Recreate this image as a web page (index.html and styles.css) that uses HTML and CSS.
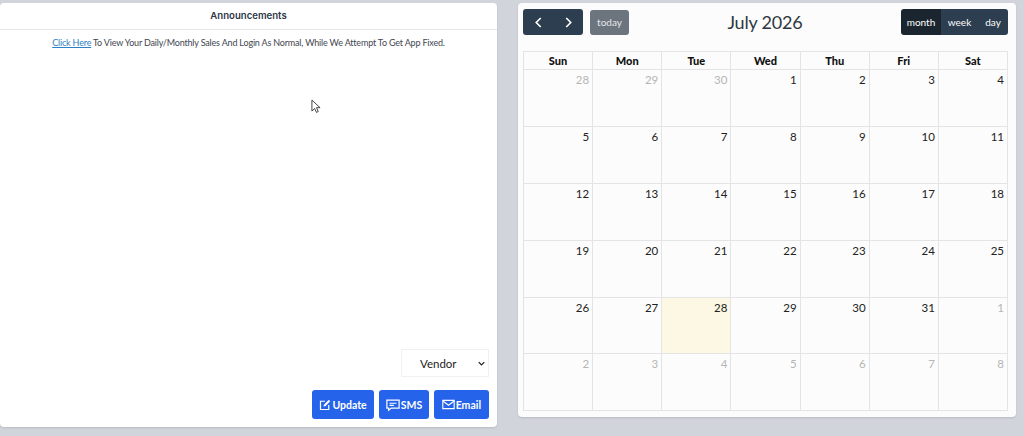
FILE: index.html
```html
<!DOCTYPE html>
<html lang="en">
<head>
<meta charset="utf-8">
<title>Dashboard</title>
<link rel="stylesheet" href="styles.css">
</head>
<body>
<main class="page">
  <section class="card ann">
    <header class="ann-head">Announcements</header>
    <p class="ann-text"><a href="#">Click Here</a> To View Your Daily/Monthly Sales And Login As Normal, While We Attempt To Get App Fixed.</p>
    <div class="ann-foot">
      <select class="vendor"><option>Vendor</option></select>
      <div class="actions">
        <button class="act act-update"><svg viewBox="0 0 16 16" width="12" height="12" fill="none" stroke="currentColor" stroke-width="1.6"><path d="M8 3H2v11h11V8"/><path d="M6 10l.5-2.500L13 1l2 2-6.500 6.500z" fill="currentColor" stroke="none"/></svg>Update</button>
        <button class="act act-sms"><svg viewBox="0 0 16 16" width="14" height="14" fill="none" stroke="currentColor" stroke-width="1.400"><path d="M1 2.500h14v9H6l-3 2.500v-2.500H1z"/><path d="M4 6h8M4 8.500h5"/></svg>SMS</button>
        <button class="act"><svg viewBox="0 0 16 16" width="13" height="13" fill="none" stroke="currentColor" stroke-width="1.400"><path d="M1 3h14v10H1z"/><path d="M1.500 4L8 9l6.500-5"/></svg>Email</button>
      </div>
    </div>
  </section>
  <section class="card cal">
    <div class="toolbar">
      <div class="group nav">
        <button class="tb"><svg viewBox="0 0 12 16" width="9" height="13" fill="none" stroke="currentColor" stroke-width="2.200"><path d="M9 2L3 8l6 6"/></svg></button>
        <button class="tb"><svg viewBox="0 0 12 16" width="9" height="13" fill="none" stroke="currentColor" stroke-width="2.200"><path d="M3 2l6 6-6 6"/></svg></button>
      </div>
      <button class="today">today</button>
      <h2 class="title">July 2026</h2>
      <div class="group views">
        <button class="tb on">month</button>
        <button class="tb wk">week</button>
        <button class="tb">day</button>
      </div>
    </div>
    <div class="grid">
      <div class="dow">Sun</div><div class="dow">Mon</div><div class="dow">Tue</div><div class="dow">Wed</div><div class="dow">Thu</div><div class="dow">Fri</div><div class="dow">Sat</div>
      <div class="day out">28</div><div class="day out">29</div><div class="day out">30</div><div class="day">1</div><div class="day">2</div><div class="day">3</div><div class="day">4</div>
      <div class="day">5</div><div class="day">6</div><div class="day">7</div><div class="day">8</div><div class="day">9</div><div class="day">10</div><div class="day">11</div>
      <div class="day">12</div><div class="day">13</div><div class="day">14</div><div class="day">15</div><div class="day">16</div><div class="day">17</div><div class="day">18</div>
      <div class="day">19</div><div class="day">20</div><div class="day">21</div><div class="day">22</div><div class="day">23</div><div class="day">24</div><div class="day">25</div>
      <div class="day">26</div><div class="day">27</div><div class="day now">28</div><div class="day">29</div><div class="day">30</div><div class="day">31</div><div class="day out">1</div>
      <div class="day out">2</div><div class="day out">3</div><div class="day out">4</div><div class="day out">5</div><div class="day out">6</div><div class="day out">7</div><div class="day out">8</div>
    </div>
  </section>
</main>
<svg class="cursor" viewBox="0 0 11 16" width="10" height="15"><path d="M1 1v12l3-2.800 2 4.300 2-1-2-4.200h4z" fill="#fff" stroke="#333" stroke-width="1"/></svg>
</body>
</html>
```
FILE: styles.css
```css
* { box-sizing: border-box; }
html, body { margin: 0; height: 436px; overflow: hidden; }
body { background: #d1d5db; font-family: "Lato", "Liberation Sans", sans-serif; color: #111; position: relative; }
.page { display: flex; align-items: flex-start; gap: 21px; padding-top: 3px; }
.card { background: #fff; border-radius: 4px; box-shadow: 0 1px 2px rgba(0,0,0,.12); }
.ann { width: 497px; height: 424px; display: flex; flex-direction: column; }
.ann-head { height: 27px; border-bottom: 1px solid #e5e7eb; text-align: center; font: 600 9.600px/26px "Inter", sans-serif; color: #2d3748; }
.ann-text { margin: 6px 0 0; text-align: center; font-size: 9px; line-height: 13px; color: #3f4650; letter-spacing: -.18px; }
.ann-text a { color: #2f7fc4; }
.ann-foot { margin-top: auto; padding: 0 8px 8px 0; display: flex; flex-direction: column; align-items: flex-end; gap: 13px; }
.vendor { appearance: none; width: 88px; height: 28px; background: #fff url("data:image/svg+xml,%3Csvg xmlns='http://www.w3.org/2000/svg' viewBox='0 0 10 6'%3E%3Cpath d='M1 1l4 4 4-4' fill='none' stroke='%23222' stroke-width='1.800'/%3E%3C/svg%3E") no-repeat right 3px center / 7px 5px; border: 1px solid #f0f1f3; font: 11.500px "Lato", sans-serif; color: #222; padding-left: 18px; }
.actions { display: flex; gap: 5px; }
.act { height: 29px; padding: 0 8px; display: flex; align-items: center; gap: 1px; background: #2563eb; color: #fff; border: 0; border-radius: 3px; font: 700 10.500px "Lato", sans-serif; }
.act-update { padding: 0 7.500px; }
.act-sms { padding: 0 6.500px; }
.cal { width: 498px; height: 414px; background: #fcfcfc; padding: 6px 8px 0 5px; }
.toolbar { display: flex; align-items: center; height: 26px; }
.group { display: flex; border-radius: 3px; overflow: hidden; }
.tb { height: 26px; border: 0; background: #2c3e50; color: #fff; font: 10px "Lato", sans-serif; padding: 0; display: flex; align-items: center; justify-content: center; }
.nav .tb { width: 30px; }
.today { margin-left: 7px; width: 39px; height: 25px; background: #6c757d; color: #e5e7ea; border: 0; border-radius: 3px; font: 10px "Lato", sans-serif; padding: 0; }
.title { flex: 1; margin: 0; text-align: center; font-weight: 400; font-size: 18px; letter-spacing: -.2px; color: #2f3842; }
.views .tb { width: 30px; }
.views .tb.wk { width: 37px; }
.views .tb.on { width: 40px; background: #1a252f; }
.grid { margin-top: 16px; display: grid; grid-template-columns: repeat(7, 1fr); grid-template-rows: 18px repeat(6, 56.900px); width: 485px; border-top: 1px solid #e4e4e4; border-left: 1px solid #e4e4e4; }
.dow, .day { border-right: 1px solid #e4e4e4; border-bottom: 1px solid #e4e4e4; }
.dow { text-align: center; font-weight: 900; font-size: 11px; line-height: 17px; }
.day { text-align: right; padding: 3px 3px 0 0; font-size: 11.500px; line-height: 13px; color: #222; }
.out { color: #b5b5b5; }
.now { background: #fcf8e3; }
.cursor { position: absolute; left: 311px; top: 99px; }
```
